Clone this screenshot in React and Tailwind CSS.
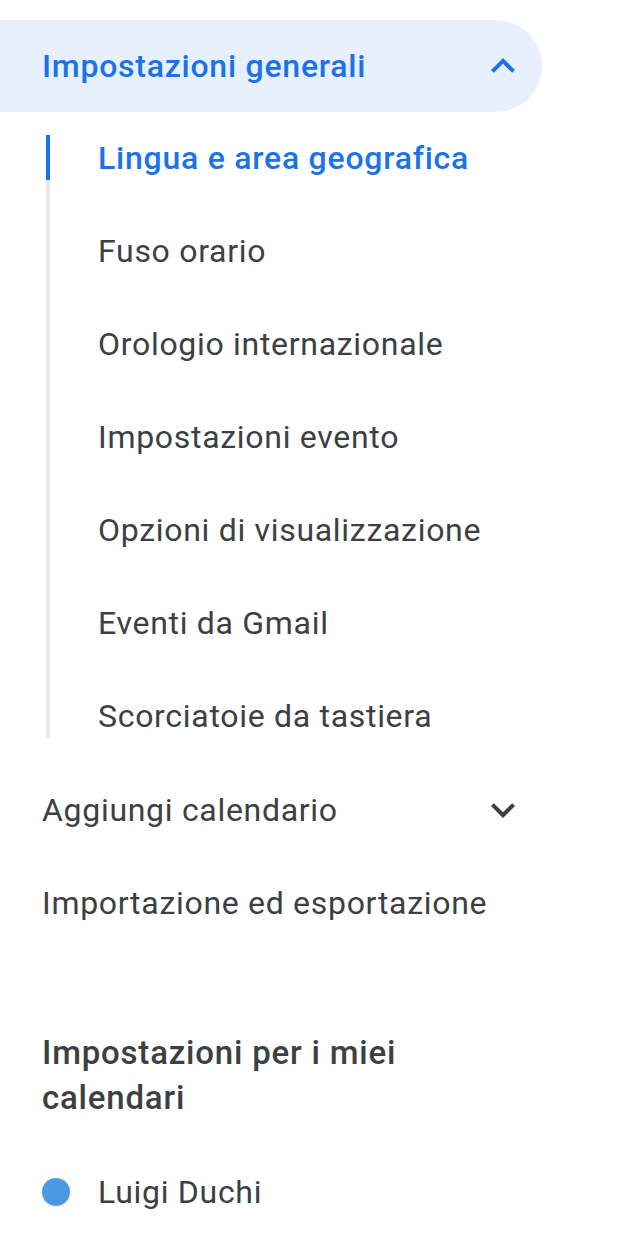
const subItems = [
  "Lingua e area geografica",
  "Fuso orario",
  "Orologio internazionale",
  "Impostazioni evento",
  "Opzioni di visualizzazione",
  "Eventi da Gmail",
  "Scorciatoie da tastiera",
];

const ChevronUp = ({ className }) => (
  <svg viewBox="0 0 24 24" className={className} fill="currentColor">
    <path d="M12 8l-6 6 1.41 1.41L12 10.83l4.59 4.58L18 14z" />
  </svg>
);

const ChevronDown = ({ className }) => (
  <svg viewBox="0 0 24 24" className={className} fill="currentColor">
    <path d="M16.59 8.59L12 13.17 7.41 8.59 6 10l6 6 6-6z" />
  </svg>
);

export default function App() {
  return (
    <div
      className="w-[640px] min-h-[1238px] bg-white pt-[20px] text-[#3c4043]"
      style={{ fontFamily: "Roboto, 'Liberation Sans', sans-serif" }}
    >
      {/* expanded section */}
      <div className="flex h-[92px] w-[542px] items-center justify-between rounded-r-full bg-[#e8f0fe] pl-[42px] pr-[15px]">
        <span className="text-[32px] font-medium tracking-[0.75px] text-[#1a73e8]">
          Impostazioni generali
        </span>
        <ChevronUp className="h-[48px] w-[48px] text-[#1a73e8]" />
      </div>

      <div className="ml-[46px] mt-[23px] mb-[25px] flex flex-col gap-[48px] border-l-4 border-[#e8eaed]">
        {subItems.map((item, i) => (
          <div
            key={item}
            className={
              i === 0
                ? "-ml-[4px] flex h-[45px] items-center border-l-4 border-[#1a73e8] pl-[48px] text-[32px] font-medium tracking-[0.75px] text-[#1a73e8]"
                : "flex h-[45px] items-center pl-[48px] text-[32px] tracking-[0.7px]"
            }
          >
            {item}
          </div>
        ))}
      </div>

      <div className="flex h-[93px] w-[542px] items-center justify-between pl-[42px] pr-[15px]">
        <span className="text-[32px] tracking-[0.7px]">Aggiungi calendario</span>
        <ChevronDown className="h-[48px] w-[48px] text-[#3c4043]" />
      </div>
      <div className="flex h-[93px] items-center pl-[42px] text-[32px] tracking-[0.7px]">
        Importazione ed esportazione
      </div>

      <div className="mt-[81px] w-[500px] pl-[42px] text-[33px] font-medium leading-[45px] tracking-[0.8px]">
        Impostazioni per i miei calendari
      </div>

      <div className="mt-[25px] flex h-[93px] items-center pl-[42px]">
        <span className="h-[28px] w-[28px] rounded-full bg-[#4a9ae3]" />
        <span className="ml-[28px] text-[32px] tracking-[0.7px]">Luigi Duchi</span>
      </div>
    </div>
  );
}
